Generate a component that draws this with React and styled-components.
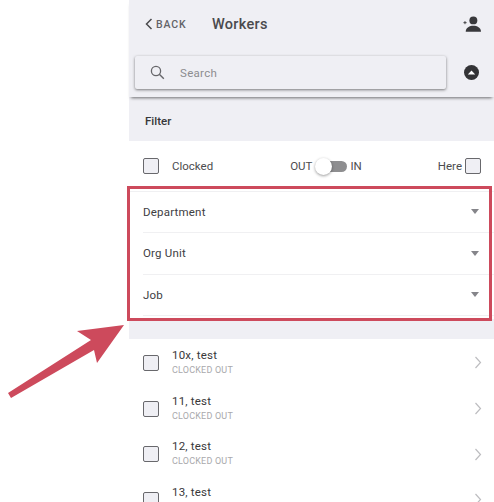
import styled, { createGlobalStyle } from "styled-components";

const GlobalStyle = createGlobalStyle`
  html, body {
    margin: 0;
    height: 100%;
    overflow: hidden;
    background: #fff;
    font-family: Roboto, "Liberation Sans", sans-serif;
  }
`

const Page = styled.div`
  position: relative;
  width: 494px;
  height: 502px;
  overflow: hidden;
  padding-left: 129px;
  box-sizing: border-box;
`

const Phone = styled.div`
  width: 365px;
`

const Header = styled.div`
  height: 97px;
  background: #efeff4;
  box-shadow: 0 3px 3px -2px rgba(0, 0, 0, 0.55);
  position: relative;
  box-sizing: border-box;
`

const TopBar = styled.div`
  display: flex;
  align-items: center;
  height: 48px;
  padding: 0 13px 0 16px;
`

const BackLink = styled.div`
  display: flex;
  align-items: center;
  gap: 3px;
  width: 67px;
  color: #636368;
  font-size: 10.5px;
  font-weight: 500;
  letter-spacing: 0.9px;
`

const Title = styled.div`
  flex: 1;
  font-size: 14.5px;
  font-weight: 500;
  letter-spacing: 0.3px;
  color: #4a4a4d;
`

const SearchRow = styled.div`
  display: flex;
  align-items: center;
  margin-top: 8px;
  padding: 0 12px 0 6px;
  gap: 18px;
`

const SearchCard = styled.div`
  width: 311px;
  height: 33px;
  display: flex;
  align-items: center;
  gap: 15px;
  padding-left: 15px;
  box-sizing: border-box;
  background: #efeff4;
  border-radius: 2px;
  box-shadow: 0 1px 3px rgba(0, 0, 0, 0.5);
  color: #8c8c8f;
  font-size: 11.5px;
  letter-spacing: 0.3px;
`

const FilterBar = styled.div`
  height: 44px;
  display: flex;
  align-items: center;
  padding: 4px 0 0 16px;
  box-sizing: border-box;
  background: #efeff4;
  font-size: 11.5px;
  font-weight: 500;
  color: #37373a;
`

const ClockRow = styled.div`
  height: 46px;
  display: grid;
  grid-template-columns: 1fr auto 1fr;
  align-items: center;
  padding: 4px 13px 0 14px;
  box-sizing: border-box;
  font-size: 11.5px;
  color: #4c4c4f;
`

const Side = styled.div`
  display: flex;
  align-items: center;
  justify-content: ${(props) => (props.$end ? "flex-end" : "flex-start")};
  gap: ${(props) => (props.$end ? "3px" : "13px")};
`

const Box = styled.div`
  width: 16px;
  height: 16px;
  border: 1px solid #68686c;
  border-radius: 2px;
  background: #efeff4;
  box-sizing: border-box;
  flex: none;
`

const Switch = styled.div`
  display: flex;
  align-items: center;
  margin-left: 28px;
`

const Track = styled.div`
  position: relative;
  width: 28px;
  height: 11px;
  margin: 0 3px 0 7px;
  border-radius: 6px;
  background: #8e8e90;
`

const Thumb = styled.div`
  position: absolute;
  left: -4px;
  top: -3px;
  width: 17px;
  height: 17px;
  border-radius: 50%;
  background: #fff;
  box-shadow: 0 1px 3px rgba(0, 0, 0, 0.4);
`

const SelectList = styled.div`
  margin-top: 3.5px;
  position: relative;
  border-top: 1px solid #f0f0f2;
`

const SelectRow = styled.div`
  height: 41.5px;
  margin-left: 14px;
  padding-right: 15px;
  display: flex;
  align-items: center;
  justify-content: space-between;
  border-bottom: 1px solid #f0f0f2;
  box-sizing: border-box;
  font-size: 11.5px;
  letter-spacing: 0.2px;
  color: #404043;
`

const Caret = styled.div`
  width: 0;
  height: 0;
  border-left: 4.5px solid transparent;
  border-right: 4.5px solid transparent;
  border-top: 5px solid #85858a;
`

const Spacer = styled.div`
  height: 20px;
  margin-top: 3px;
  background: #efeff4;
`

const WorkerRow = styled.div`
  height: 45.7px;
  display: flex;
  align-items: center;
  padding: 2px 12px 0 14px;
  box-sizing: border-box;
  gap: 13px;
`

const WorkerText = styled.div`
  flex: 1;
`

const WorkerName = styled.div`
  font-size: 11.5px;
  line-height: 14px;
  letter-spacing: 0.2px;
  color: #38383a;
`

const WorkerStatus = styled.div`
  margin-top: 1px;
  font-size: 9px;
  line-height: 15px;
  letter-spacing: 0.2px;
  color: #a9a9ac;
`

const Highlight = styled.div`
  position: absolute;
  left: 127px;
  top: 186px;
  width: 365px;
  height: 135px;
  border: 3px solid #cd4a5c;
  box-sizing: border-box;
`

const Arrow = styled.svg`
  position: absolute;
  left: 0;
  top: 310px;
`

const workers = ["10x, test", "11, test", "12, test", "13, test"];
const selects = ["Department", "Org Unit", "Job"];

const App = () => {
  return (
    <>
      <GlobalStyle />
      <Page>
        <Phone>
          <Header>
            <TopBar>
              <BackLink>
                <svg width="8" height="12" viewBox="0 0 8 12">
                  <path d="M6.5 1 L1.5 6 L6.5 11" fill="none" stroke="#4a4a4e" strokeWidth="1.5" />
                </svg>
                BACK
              </BackLink>
              <Title>Workers</Title>
              <svg width="18" height="18" viewBox="0 0 20 20">
                <circle cx="11.5" cy="6" r="4.4" fill="#39393c" />
                <path d="M3 18.5 C3 14 7.5 12 11.5 12 C15.5 12 20 14 20 18.5 Z" fill="#39393c" />
                <path d="M0.5 8.5 H4 M2.2 6.8 V10.2" stroke="#39393c" strokeWidth="1" />
              </svg>
            </TopBar>
            <SearchRow>
              <SearchCard>
                <svg width="15" height="15" viewBox="0 0 15 15">
                  <circle cx="6" cy="6" r="4.6" fill="none" stroke="#66666a" strokeWidth="1.3" />
                  <path d="M9.3 9.3 L13.8 13.8" stroke="#66666a" strokeWidth="1.4" />
                </svg>
                Search
              </SearchCard>
              <svg width="15" height="15" viewBox="0 0 15 15">
                <circle cx="7.5" cy="7.5" r="7.5" fill="#333336" />
                <path d="M3.8 9.5 L7.5 5.6 L11.2 9.5 Z" fill="#fff" />
              </svg>
            </SearchRow>
          </Header>
          <FilterBar>Filter</FilterBar>
          <ClockRow>
            <Side>
              <Box />
              Clocked
            </Side>
            <Switch>
              OUT
              <Track>
                <Thumb />
              </Track>
              IN
            </Switch>
            <Side $end>
              Here
              <Box />
            </Side>
          </ClockRow>
          <SelectList>
            {selects.map((label) => (
              <SelectRow key={label}>
                {label}
                <Caret />
              </SelectRow>
            ))}
          </SelectList>
          <Spacer />
          {workers.map((name) => (
            <WorkerRow key={name}>
              <Box />
              <WorkerText>
                <WorkerName>{name}</WorkerName>
                <WorkerStatus>CLOCKED OUT</WorkerStatus>
              </WorkerText>
              <svg width="8" height="13" viewBox="0 0 8 13">
                <path d="M1.5 1 L6.5 6.5 L1.5 12" fill="none" stroke="#bdbdc0" strokeWidth="1.2" />
              </svg>
            </WorkerRow>
          ))}
        </Phone>
        <Highlight />
        <Arrow width="125" height="90" viewBox="0 0 125 90">
          <path d="M8 83 L11 88 L94 40 L97 53 L124 15 L77 21 L91 30 Z" fill="#cd4a5c" />
        </Arrow>
      </Page>
    </>
  )
}

export default App
